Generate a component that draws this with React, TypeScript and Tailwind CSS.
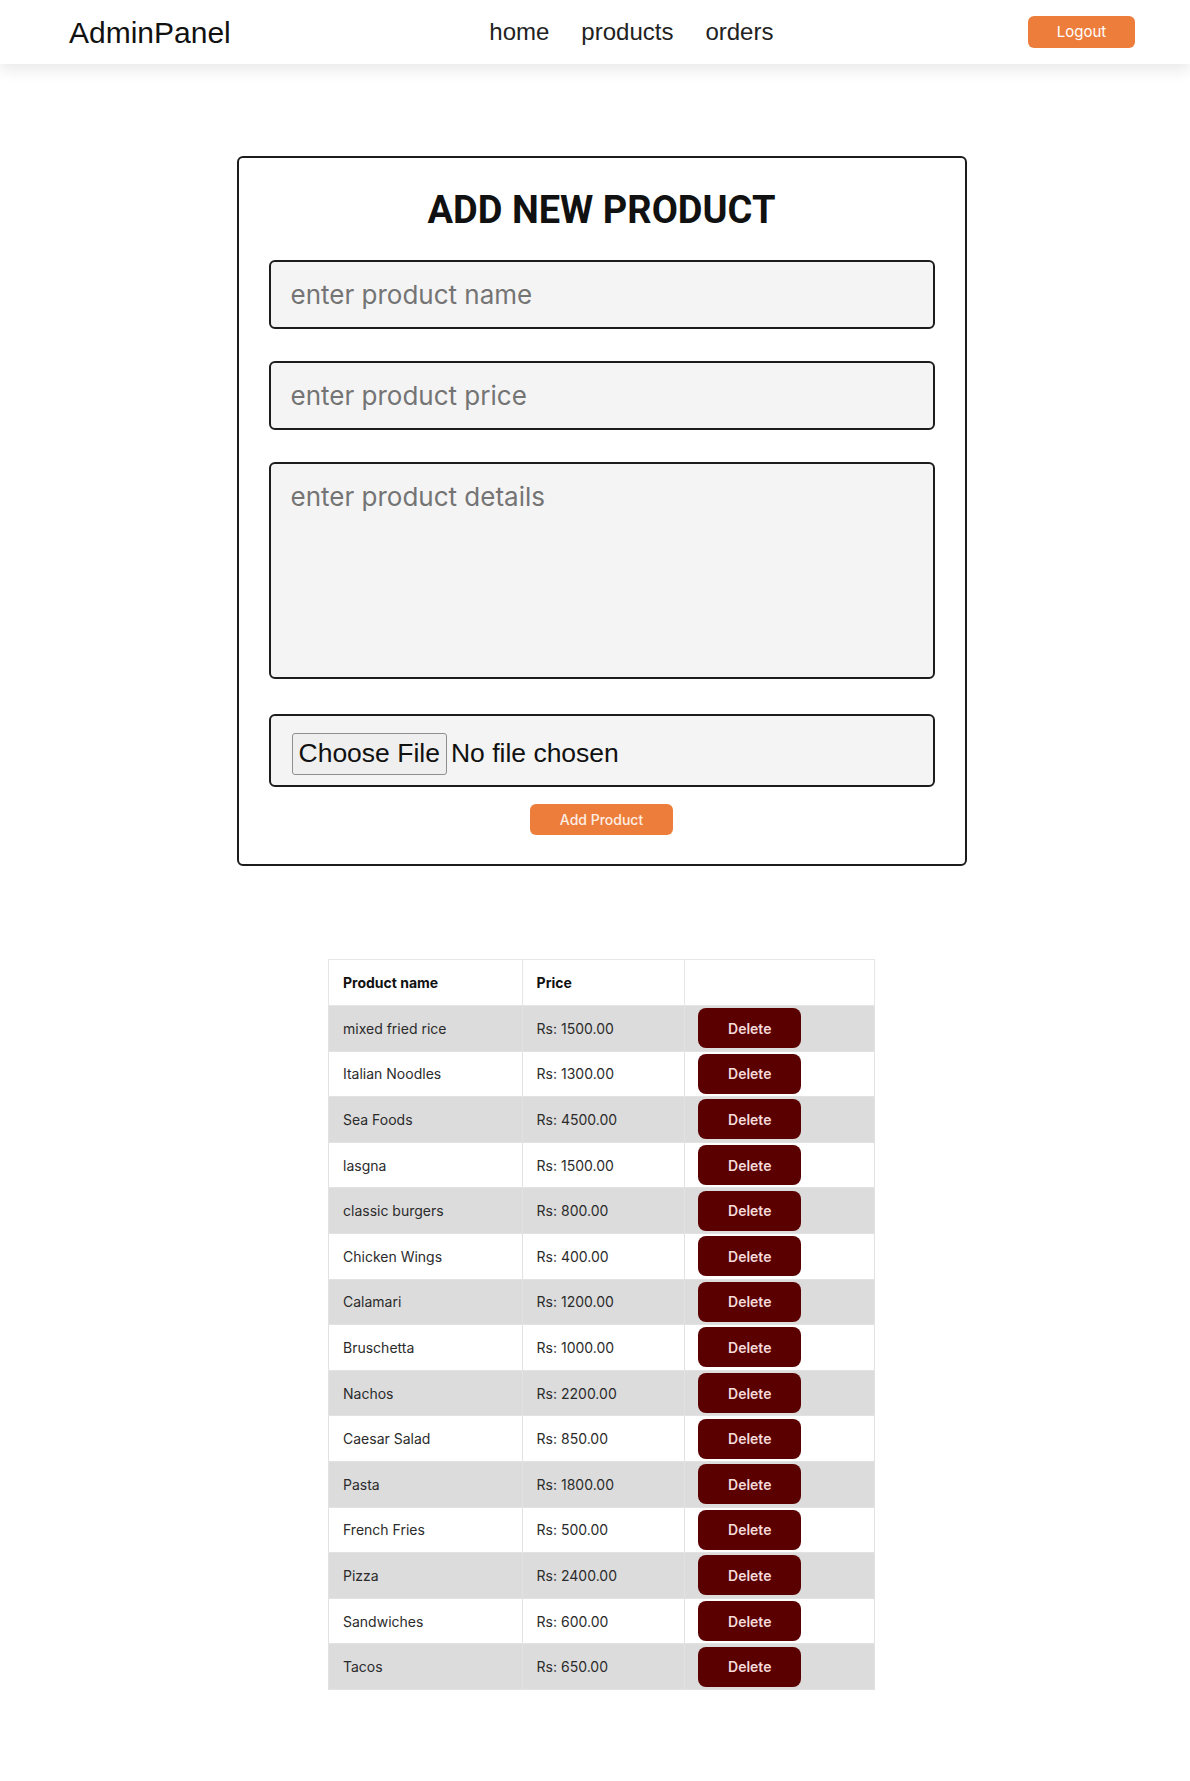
import React from "react";

const products = [
  { name: "mixed fried rice", price: "1500.00" },
  { name: "Italian Noodles", price: "1300.00" },
  { name: "Sea Foods", price: "4500.00" },
  { name: "lasgna", price: "1500.00" },
  { name: "classic burgers", price: "800.00" },
  { name: "Chicken Wings", price: "400.00" },
  { name: "Calamari", price: "1200.00" },
  { name: "Bruschetta", price: "1000.00" },
  { name: "Nachos", price: "2200.00" },
  { name: "Caesar Salad", price: "850.00" },
  { name: "Pasta", price: "1800.00" },
  { name: "French Fries", price: "500.00" },
  { name: "Pizza", price: "2400.00" },
  { name: "Sandwiches", price: "600.00" },
  { name: "Tacos", price: "650.00" },
];

const App: React.FC = () => {
  return (
    <div className="min-h-screen bg-white font-['Inter','Noto_Sans',sans-serif] pb-[91px]">
      {/* Navbar */}
      <nav className="flex items-center justify-between h-16 pl-[69px] pr-[55px] bg-white shadow-[0_6px_14px_rgba(0,0,0,0.09)]">
        <span className="font-['Liberation_Sans',Arial,sans-serif] text-[30px] text-[#111]">
          AdminPanel
        </span>
        <ul className="flex items-center gap-[32px] pl-[4px] font-['Liberation_Sans',Arial,sans-serif] text-[24px] text-[#222]">
          <li>home</li>
          <li>products</li>
          <li>orders</li>
        </ul>
        <button className="w-[107px] h-8 rounded-md bg-[#ed7d3a] text-white text-[15px]">
          Logout
        </button>
      </nav>

      <div className="flex flex-col items-center pl-[13px]">
        {/* Add product form */}
        <form className="mt-[92px] w-[730px] flex flex-col items-center border-2 border-[#1c1c1c] rounded-md px-[30px] pt-[33px] pb-[29px]">
          <h1 className="font-['Roboto',sans-serif] font-bold text-[38px] leading-none text-[#111] mb-[31px]">
            ADD NEW PRODUCT
          </h1>
          <input
            type="text"
            placeholder="enter product name"
            className="w-full h-[69px] px-5 text-[26px] bg-[#f4f4f4] border-2 border-[#1c1c1c] rounded-md placeholder:text-[#747474] outline-none"
          />
          <input
            type="text"
            placeholder="enter product price"
            className="mt-8 w-full h-[69px] px-5 text-[26px] bg-[#f4f4f4] border-2 border-[#1c1c1c] rounded-md placeholder:text-[#747474] outline-none"
          />
          <textarea
            placeholder="enter product details"
            className="mt-8 w-full h-[217px] px-5 pt-[17px] text-[26px] leading-8 bg-[#f4f4f4] border-2 border-[#1c1c1c] rounded-md placeholder:text-[#747474] outline-none resize-none"
          />
          <input
            type="file"
            className="mt-[35px] w-full h-[73px] px-[21px] py-[17px] font-['Liberation_Sans',Arial,sans-serif] text-[26.5px] text-[#111] bg-[#f4f4f4] border-2 border-[#1c1c1c] rounded-md file:px-[6px] file:py-0 file:border file:border-[#8f8f8f] file:rounded-[3px] file:bg-[#efefef] file:text-[#111]"
          />
          <button
            type="button"
            className="mt-[17px] w-[143px] h-[31px] rounded-md bg-[#ed7d3a] text-[#fdeee4] text-[14px] font-medium"
          >
            Add Product
          </button>
        </form>

        {/* Products table */}
        <table className="mt-[93px] w-[547px] border-collapse text-[14px] text-[#2b2b2b]">
          <thead>
            <tr className="bg-white">
              <th className="w-[194px] h-[46px] px-[14px] text-left font-bold text-[#111] border border-[#e6e6e6]">
                Product name
              </th>
              <th className="w-[163px] h-[46px] px-[14px] text-left font-bold text-[#111] border border-[#e6e6e6]">
                Price
              </th>
              <th className="w-[190px] h-[46px] border border-[#e6e6e6]"></th>
            </tr>
          </thead>
          <tbody>
            {products.map((p, i) => (
              <tr key={i} className={i % 2 === 0 ? "bg-[#dcdcdc]" : "bg-white"}>
                <td className="h-[45.6px] px-[14px] border border-[#e2e2e2]">{p.name}</td>
                <td className="h-[45.6px] px-[14px] border border-[#e2e2e2]">Rs: {p.price}</td>
                <td className="h-[45.6px] px-[13px] py-0 border border-[#e2e2e2]">
                  <button className="w-[103px] h-10 rounded-lg bg-[#5a0000] text-[#f4dada] text-[14px] font-semibold">
                    Delete
                  </button>
                </td>
              </tr>
            ))}
          </tbody>
        </table>
      </div>
    </div>
  );
};

export default App;
